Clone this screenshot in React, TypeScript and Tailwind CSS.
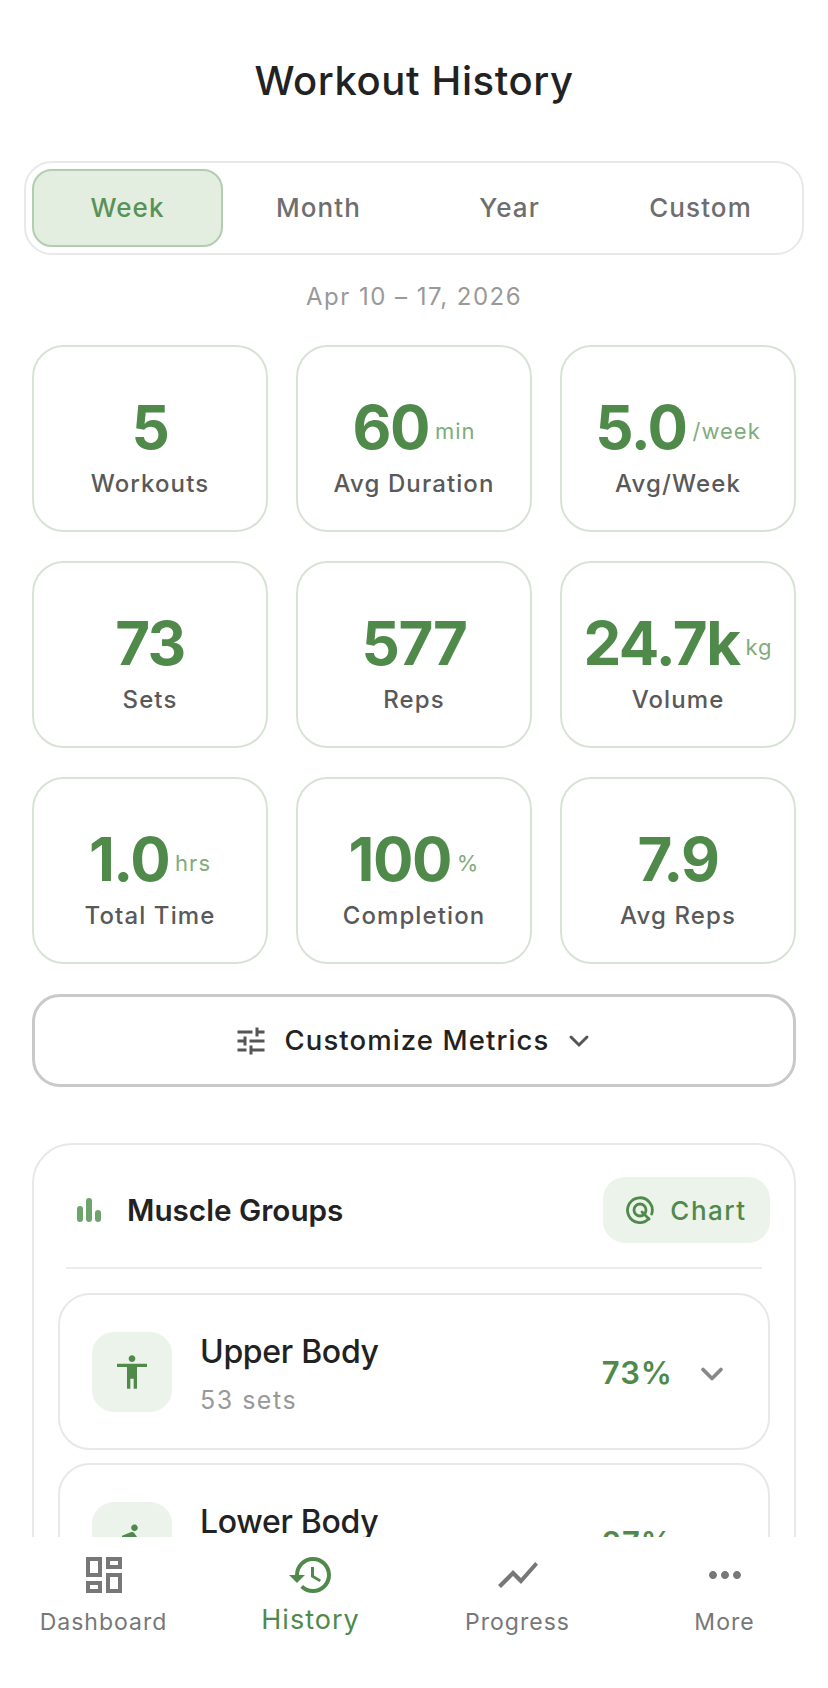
import { ChevronDown } from "lucide-react";
import {
  MdAccessibility,
  MdDirectionsRun,
  MdHistory,
  MdMoreHoriz,
  MdOutlineDashboard,
  MdShowChart,
  MdTune,
} from "react-icons/md";
import type { IconType } from "react-icons";

const tabs = ["Week", "Month", "Year", "Custom"];

const stats = [
  { value: "5", label: "Workouts" },
  { value: "60", unit: "min", label: "Avg Duration" },
  { value: "5.0", unit: "/week", label: "Avg/Week" },
  { value: "73", label: "Sets" },
  { value: "577", label: "Reps" },
  { value: "24.7k", unit: "kg", label: "Volume" },
  { value: "1.0", unit: "hrs", label: "Total Time" },
  { value: "100", unit: "%", label: "Completion" },
  { value: "7.9", label: "Avg Reps" },
];

const groups = [
  { name: "Upper Body", sets: "53 sets", pct: "73%", icon: MdAccessibility },
  { name: "Lower Body", sets: "20 sets", pct: "27%", icon: MdDirectionsRun },
];

const navItems: { label: string; icon: IconType; active?: boolean }[] = [
  { label: "Dashboard", icon: MdOutlineDashboard },
  { label: "History", icon: MdHistory, active: true },
  { label: "Progress", icon: MdShowChart },
  { label: "More", icon: MdMoreHoriz },
];

function StatCard({ value, unit, label }: { value: string; unit?: string; label: string }) {
  return (
    <div className="h-[187px] rounded-[32px] border-2 border-[#d8e3d6] pt-[9px] flex flex-col items-center justify-center">
      <div className="flex items-center justify-center h-[72px] mt-[4px]">
        <span className="text-[60px] leading-[72px] font-bold text-[#4f8a4b] tracking-[-1.5px]">{value}</span>
        {unit && <span className="ml-[6px] mt-[9px] text-[22px] text-[#7fac7c] tracking-[1px]">{unit}</span>}
      </div>
      <div className="mt-[5px] text-[24px] leading-[32px] font-[450] text-[#595959] tracking-[1.1px]">{label}</div>
    </div>
  );
}

function GroupRow({ name, sets, pct, icon: Icon }: (typeof groups)[number]) {
  return (
    <div className="h-[157px] shrink-0 rounded-[32px] border-2 border-[#e8e8e8] flex items-center pl-[32px] pr-[38px]">
      <div className="w-[80px] h-[80px] rounded-[22px] bg-[#ecf3eb] flex items-center justify-center text-[#4f8a4b]">
        <Icon size={40} />
      </div>
      <div className="ml-[28px] mt-[4px] flex-1">
        <div className="text-[32px] leading-[40px] font-medium text-[#222222] tracking-[-0.3px]">{name}</div>
        <div className="mt-[12px] text-[25px] leading-[32px] text-[#999999] tracking-[1.5px]">{sets}</div>
      </div>
      <span className="mt-[4px] text-[31px] font-semibold text-[#4f8a4b] tracking-[1px]">{pct}</span>
      <ChevronDown size={36} strokeWidth={2.5} className="ml-[21px] mt-[4px] text-[#888888]" />
    </div>
  );
}

export default function App() {
  return (
    <div className="h-[1688px] w-[828px] bg-white flex flex-col overflow-hidden font-[Inter,sans-serif]">
      <div className="flex-1 min-h-0 overflow-hidden">
        <h1 className="pt-[56px] h-[161px] text-center text-[40px] leading-[50px] font-medium text-[#222222] tracking-[0.6px]">
          Workout History
        </h1>

        <div className="mx-[24px] h-[94px] rounded-[28px] border-2 border-[#e8e8e8] p-[6px] grid grid-cols-4">
          {tabs.map((tab, i) => (
            <div
              key={tab}
              className={
                i === 0
                  ? "rounded-[20px] border-2 border-[#b3cdb0] bg-[#e3eee1] text-[#5a9156] pb-[1px] flex items-center justify-center text-[26px] font-[450] tracking-[1.1px]"
                  : "pb-[1px] flex items-center justify-center text-[26px] font-[450] text-[#6e6e6e] tracking-[1.1px]"
              }
            >
              {tab}
            </div>
          ))}
        </div>

        <div className="mt-[26px] text-center text-[24px] leading-[32px] text-[#999999] tracking-[1.5px]">
          Apr 10 – 17, 2026
        </div>

        <div className="mt-[32px] mx-[32px] grid grid-cols-3 gap-x-[28px] gap-y-[29px]">
          {stats.map((s) => (
            <StatCard key={s.label} {...s} />
          ))}
        </div>

        <div className="mt-[30px] mx-[32px] h-[93px] rounded-[28px] border-[3px] border-[#c9c9c9] flex items-center justify-center text-[#555555]">
          <MdTune size={36} />
          <span className="ml-[16px] text-[27.5px] font-medium text-[#222222] tracking-[1.1px]">Customize Metrics</span>
          <ChevronDown size={32} strokeWidth={2.2} className="ml-[14px]" />
        </div>

        <div className="mt-[56px] mx-[32px] rounded-t-[40px] border-2 border-[#e8e8e8] px-[24px]">
          <div className="pt-[32px] pb-[24px] border-b-2 border-[#ececec] mx-[8px]">
            <div className="flex items-center justify-between h-[66px] -mx-[8px]">
              <div className="flex items-center pl-[18px]">
                <svg width="26" height="24" viewBox="0 0 26 24" className="text-[#6ea36b]">
                  <rect x="1" y="8" width="6" height="16" rx="3" fill="currentColor" />
                  <rect x="10" y="0" width="6" height="24" rx="3" fill="currentColor" />
                  <rect x="19" y="12" width="6" height="12" rx="3" fill="currentColor" />
                </svg>
                <span className="ml-[25px] text-[29.7px] font-semibold text-[#222222]">Muscle Groups</span>
              </div>
              <div className="w-[167px] h-[66px] rounded-[22px] bg-[#ecf3eb] flex items-center justify-center text-[#4f8a4b]">
                <svg width="28" height="28" viewBox="0 0 28 28" fill="none" stroke="currentColor" strokeWidth="2.8">
                  <path d="M22.8 22.8a12.4 12.4 0 1 1 2.9-4.8" strokeLinecap="round" />
                  <circle cx="14" cy="14" r="6" />
                  <path d="M16 16l7 7" strokeLinecap="round" />
                </svg>
                <span className="ml-[16px] text-[26px] font-medium tracking-[1.5px]">Chart</span>
              </div>
            </div>
          </div>
          <div className="mt-[24px] flex flex-col gap-[13px]">
            {groups.map((g) => (
              <GroupRow key={g.name} {...g} />
            ))}
          </div>
        </div>
      </div>

      <nav className="h-[151px] shrink-0 bg-white grid grid-cols-4">
        {navItems.map(({ label, icon: Icon, active }) => (
          <div
            key={label}
            className={
              active
                ? "flex flex-col items-center pt-[14px] text-[#4f8a4b]"
                : "flex flex-col items-center pt-[14px] text-[#777777]"
            }
          >
            <Icon size={48} />
            <span
              className={
                active
                  ? "mt-[3px] text-[27px] leading-[36px] tracking-[1px]"
                  : "mt-[7px] text-[23px] leading-[32px] tracking-[1px]"
              }
            >
              {label}
            </span>
          </div>
        ))}
      </nav>
    </div>
  );
}
